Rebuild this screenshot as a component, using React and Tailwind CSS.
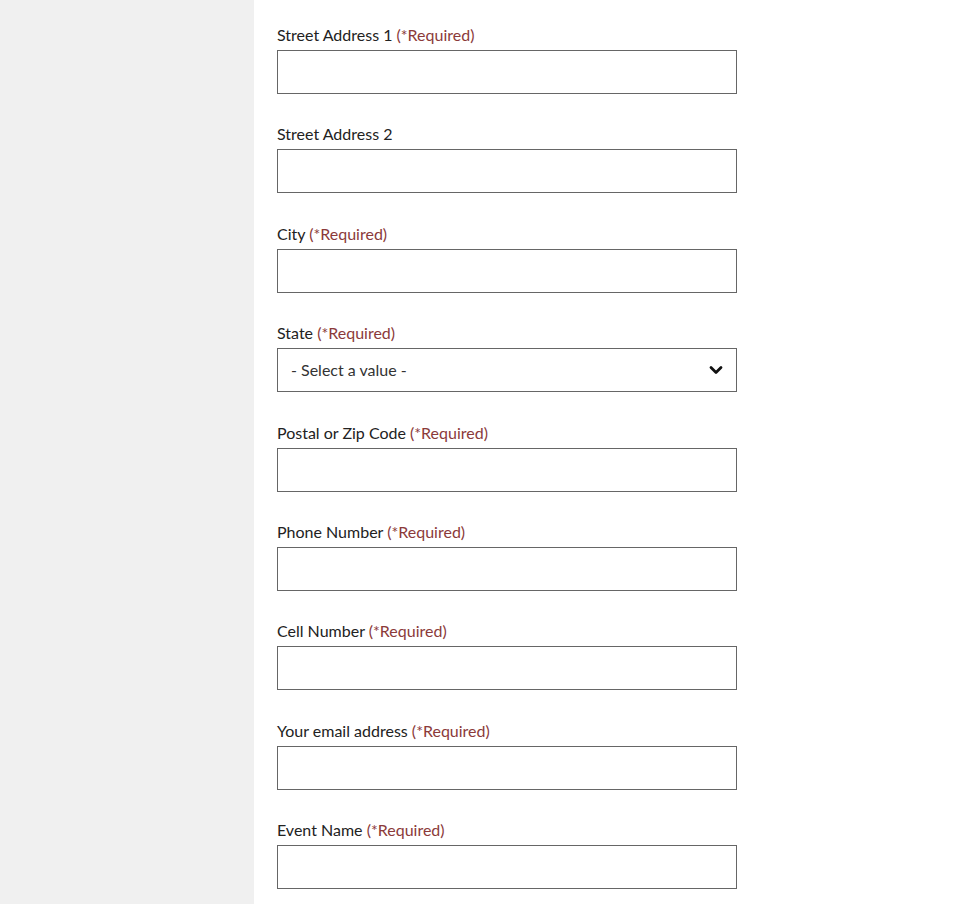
export default function App() {
  const fields = [
    { label: "Street Address 1", req: true },
    { label: "Street Address 2", req: false },
    { label: "City", req: true },
    { label: "State", req: true, select: true },
    { label: "Postal or Zip Code", req: true },
    { label: "Phone Number", req: true },
    { label: "Cell Number", req: true },
    { label: "Your email address", req: true },
    { label: "Event Name", req: true },
  ];
  return (
    <div className="flex w-[968px] h-[904px] overflow-hidden bg-white" style={{ fontFamily: "Lato, 'Noto Sans', sans-serif" }}>
      <div className="w-[254px] shrink-0 bg-[#f0f0f0]" />
      <div className="pl-[23px] pt-[26px] flex flex-col">
        {fields.map((f, i) => (
          <div key={i} className="mb-[31.4px] w-[460px]">
            <div className="h-[18px] mb-[6px] leading-[18px] text-[16px] text-[#222]">
              {f.label}
              {f.req && <span className="text-[#8b3a3a]"> (*Required)</span>}
            </div>
            {f.select ? (
              <div className="h-[44px] border border-[#666] flex items-center justify-between pl-[13px] pr-[13px]">
                <span className="text-[16px] text-[#333]">- Select a value -</span>
                <svg width="14" height="10" viewBox="0 0 14 10">
                  <path d="M2 2.5 L7 7.5 L12 2.5" fill="none" stroke="#111" strokeWidth="2.8" strokeLinecap="round" strokeLinejoin="round" />
                </svg>
              </div>
            ) : (
              <div className="h-[44px] border border-[#666] bg-white" />
            )}
          </div>
        ))}
      </div>
    </div>
  );
}
